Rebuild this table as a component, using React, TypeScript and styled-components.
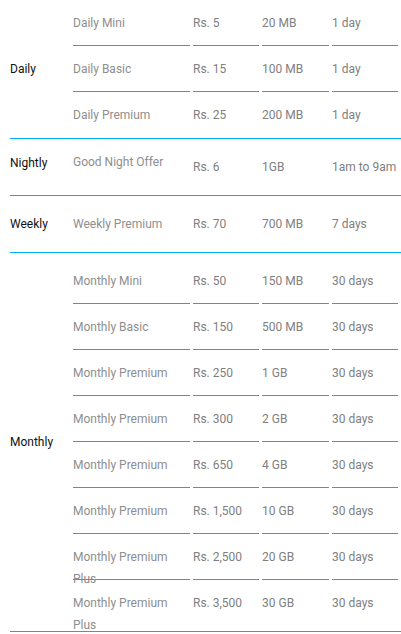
import React from "react";
import styled, { createGlobalStyle } from "styled-components";

const Global = createGlobalStyle`
  html, body { margin: 0; padding: 0; background: #ffffff; }
  body { font-family: Roboto, "Liberation Sans", Arial, sans-serif; }
`;

const LINE = "#00b0f0";

type Plan = { name: string; price: string; data: string; validity: string };
type Group = {
  label: string;
  plans: Plan[];
  rowHeight: number;
  nameTop?: boolean;
  valueTop?: boolean;
  labelTop?: boolean;
  padTop?: number;
  padBottom?: number;
};

const groups: Group[] = [
  {
    label: "Daily",
    rowHeight: 45,
    nameTop: true,
    valueTop: true,
    padBottom: 1,
    plans: [
      { name: "Daily Mini", price: "Rs. 5", data: "20 MB", validity: "1 day" },
      { name: "Daily Basic", price: "Rs. 15", data: "100 MB", validity: "1 day" },
      { name: "Daily Premium", price: "Rs. 25", data: "200 MB", validity: "1 day" },
    ],
  },
  {
    label: "Nightly",
    rowHeight: 56,
    nameTop: true,
    labelTop: true,
    plans: [{ name: "Good Night Offer", price: "Rs. 6", data: "1GB", validity: "1am to 9am" }],
  },
  {
    label: "Weekly",
    rowHeight: 56,
    plans: [{ name: "Weekly Premium", price: "Rs. 70", data: "700 MB", validity: "7 days" }],
  },
  {
    label: "Monthly",
    rowHeight: 45,
    nameTop: true,
    valueTop: true,
    padTop: 5,
    padBottom: 6,
    plans: [
      { name: "Monthly Mini", price: "Rs. 50", data: "150 MB", validity: "30 days" },
      { name: "Monthly Basic", price: "Rs. 150", data: "500 MB", validity: "30 days" },
      { name: "Monthly Premium", price: "Rs. 250", data: "1 GB", validity: "30 days" },
      { name: "Monthly Premium", price: "Rs. 300", data: "2 GB", validity: "30 days" },
      { name: "Monthly Premium", price: "Rs. 650", data: "4 GB", validity: "30 days" },
      { name: "Monthly Premium", price: "Rs. 1,500", data: "10 GB", validity: "30 days" },
      { name: "Monthly Premium Plus", price: "Rs. 2,500", data: "20 GB", validity: "30 days" },
      { name: "Monthly Premium Plus", price: "Rs. 3,500", data: "30 GB", validity: "30 days" },
    ],
  },
];

const Table = styled.div`
  padding-left: 10px;
  width: 391px;
  display: flex;
  flex-direction: column;
  font-size: 12px;
  line-height: 22px;
`;

const Section = styled.div<{ $padTop: number; $padBottom: number }>`
  display: flex;
  border-bottom: 1px solid ${LINE};
  padding-top: ${(p) => p.$padTop}px;
  padding-bottom: ${(p) => p.$padBottom}px;
`;

const Category = styled.div<{ $top?: boolean }>`
  width: 63px;
  flex: none;
  display: flex;
  align-items: ${(p) => (p.$top ? "flex-start" : "center")};
  padding-top: ${(p) => (p.$top ? "13px" : "0")};
  color: #111111;
`;

const Rows = styled.div`
  display: flex;
  flex-direction: column;
`;

const Row = styled.div<{ $h: number }>`
  display: grid;
  grid-template-columns: 117px 66px 67px 66px;
  grid-template-rows: minmax(0, 1fr);
  column-gap: 3px;
  height: ${(p) => p.$h}px;
  flex: none;
`;

const Cell = styled.div<{ $line: boolean; $top?: boolean; $tone: string }>`
  box-sizing: border-box;
  min-height: 0;
  height: 100%;
  display: flex;
  align-items: ${(p) => (p.$top ? "flex-start" : "center")};
  padding-top: ${(p) => (p.$top ? "12px" : "0")};
  border-bottom: ${(p) => (p.$line ? `1px solid ${LINE}` : "none")};
  color: ${(p) => p.$tone};
  overflow: visible;
`;

const CellText = styled.span``;

export default function App() {
  return (
    <>
      <Global />
      <Table>
        {groups.map((g) => (
          <Section key={g.label} $padTop={g.padTop ?? 0} $padBottom={g.padBottom ?? 0}>
            <Category $top={g.labelTop}>{g.label}</Category>
            <Rows>
              {g.plans.map((p, i) => {
                const line = i < g.plans.length - 1;
                const h = g.rowHeight + (line ? 1 : 0);
                return (
                  <Row key={i} $h={h}>
                    <Cell $line={line} $top={g.nameTop} $tone="#8e8e8e">
                      <CellText>{p.name}</CellText>
                    </Cell>
                    <Cell $line={line} $top={g.valueTop} $tone="#808080">
                      <CellText>{p.price}</CellText>
                    </Cell>
                    <Cell $line={line} $top={g.valueTop} $tone="#808080">
                      <CellText>{p.data}</CellText>
                    </Cell>
                    <Cell $line={line} $top={g.valueTop} $tone="#808080">
                      <CellText>{p.validity}</CellText>
                    </Cell>
                  </Row>
                );
              })}
            </Rows>
          </Section>
        ))}
      </Table>
    </>
  );
}
